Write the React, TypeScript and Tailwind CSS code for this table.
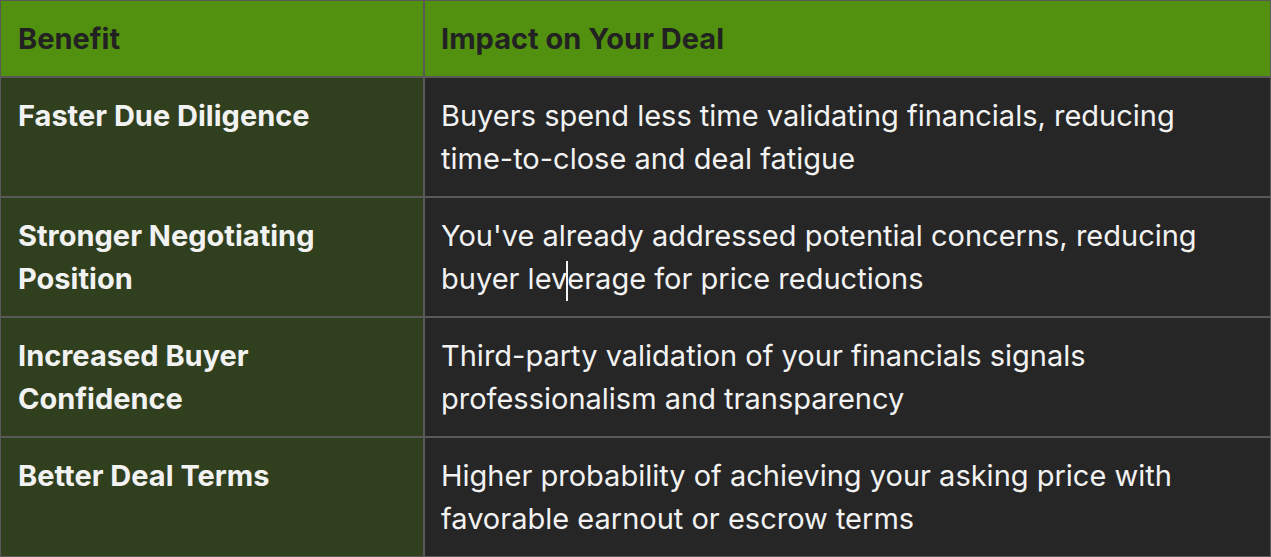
const rows = [
  {
    benefit: "Faster Due Diligence",
    impact: "Buyers spend less time validating financials, reducing time-to-close and deal fatigue",
  },
  {
    benefit: "Stronger Negotiating Position",
    impact: "caret",
  },
  {
    benefit: "Increased Buyer Confidence",
    impact: "Third-party validation of your financials signals professionalism and transparency",
  },
  {
    benefit: "Better Deal Terms",
    impact: "Higher probability of achieving your asking price with favorable earnout or escrow terms",
  },
];

export default function App() {
  return (
    <div
      className="w-[1271px] h-[557px] overflow-hidden bg-[#262626]"
      style={{ fontFamily: "Inter, 'Noto Sans', sans-serif" }}
    >
      <div className="grid grid-cols-[422px_845px] gap-[2px] bg-[#595959] pt-[1px] pl-[1px] pr-[1px] pb-[2px]">
        <div className="h-[75px] bg-[#52910f] px-[17px] flex items-center text-[29px] font-bold text-[#222]">
          Benefit
        </div>
        <div className="h-[75px] bg-[#52910f] px-[16px] flex items-center text-[29px] font-bold text-[#222]">
          Impact on Your Deal
        </div>
        {rows.map((r) => (
          <>
            <div key={r.benefit + "a"} className="h-[118px] bg-[#30401f] pl-[17px] pr-4 pt-[16px] text-[29px] leading-[43px] font-bold text-[#f2f2f2]">
              <div className="max-w-[330px]">{r.benefit}</div>
            </div>
            <div key={r.benefit + "b"} className="h-[118px] bg-[#262626] pl-[16px] pr-4 pt-[16px] text-[29px] leading-[43px] text-[#f2f2f2]">
              <div className="max-w-[790px]">
                {r.impact === "caret" ? (
                  <>
                    You've already addressed potential concerns, reducing buyer lev
                    <span className="inline-block w-[2px] h-[40px] bg-[#f2f2f2] align-middle -mx-[1px]" />
                    erage for price reductions
                  </>
                ) : (
                  r.impact
                )}
              </div>
            </div>
          </>
        ))}
      </div>
    </div>
  );
}
